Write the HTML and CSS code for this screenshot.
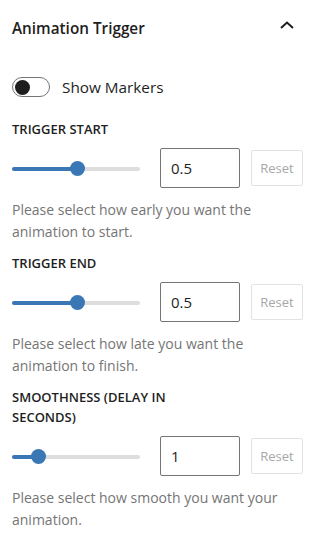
FILE: index.html
```html
<!DOCTYPE html>
<html>
<head>
<meta charset="utf-8">
<link rel="stylesheet" href="styles.css">
</head>
<body>
<div class="panel">
  <div class="header">
    <span class="title">Animation Trigger</span>
    <svg class="chevron" width="14" height="8" viewBox="0 0 14 8"><path d="M1 7 L7 1.5 L13 7" fill="none" stroke="#1e1e1e" stroke-width="2"/></svg>
  </div>

  <div class="toggle-row">
    <span class="toggle"><span class="knob"></span></span>
    <span class="toggle-label">Show Markers</span>
  </div>

  <div class="field">
    <div class="label">TRIGGER START</div>
    <div class="controls">
      <div class="slider">
        <div class="track"></div>
        <div class="fill" style="width:65px"></div>
        <div class="thumb" style="left:58px"></div>
      </div>
      <div class="input">0.5</div>
      <div class="reset">Reset</div>
    </div>
    <p class="desc">Please select how early you want the animation to start.</p>
  </div>

  <div class="field">
    <div class="label">TRIGGER END</div>
    <div class="controls">
      <div class="slider">
        <div class="track"></div>
        <div class="fill" style="width:65px"></div>
        <div class="thumb" style="left:58px"></div>
      </div>
      <div class="input">0.5</div>
      <div class="reset">Reset</div>
    </div>
    <p class="desc">Please select how late you want the animation to finish.</p>
  </div>

  <div class="field">
    <div class="label narrow">SMOOTHNESS (DELAY IN SECONDS)</div>
    <div class="controls">
      <div class="slider">
        <div class="track"></div>
        <div class="fill" style="width:26px"></div>
        <div class="thumb" style="left:19px"></div>
      </div>
      <div class="input">1</div>
      <div class="reset">Reset</div>
    </div>
    <p class="desc">Please select how smooth you want your animation.</p>
  </div>
</div>
</body>
</html>
```

FILE: styles.css
```css
html, body {
  margin: 0;
  padding: 0;
  background: #ffffff;
}
body {
  font-family: "Open Sans", "Noto Sans", sans-serif;
  color: #1e1e1e;
}
.panel {
  padding: 0 19px 0 12px;
}
.header {
  height: 56px;
  display: flex;
  align-items: center;
  justify-content: space-between;
}
.title {
  font-size: 15.3px;
  font-weight: 600;
}
.chevron {
  margin-right: 9px;
  margin-top: -6px;
}
.toggle-row {
  display: flex;
  align-items: center;
  gap: 12px;
  margin-top: 21px;
  height: 20px;
}
.toggle {
  width: 38px;
  height: 20px;
  box-sizing: border-box;
  border: 1px solid #757575;
  border-radius: 10px;
  display: flex;
  align-items: center;
  padding-left: 2px;
}
.knob {
  width: 15px;
  height: 15px;
  border-radius: 50%;
  background: #1e1e1e;
}
.toggle-label {
  font-size: 15.3px;
  color: #1e1e1e;
}
.field {
  margin-top: 22px;
}
.field + .field {
  margin-top: 10px;
}
.label {
  font-size: 13px;
  font-weight: 600;
  line-height: 20px;
  margin-bottom: 9px;
}
.label.narrow {
  width: 170px;
}
.controls {
  display: flex;
  align-items: center;
  height: 40px;
}
.slider {
  position: relative;
  width: 128px;
  height: 15px;
  margin-right: 20px;
}
.track {
  position: absolute;
  left: 0;
  right: 0;
  top: 6px;
  height: 4px;
  border-radius: 2px;
  background: #dddddd;
}
.fill {
  position: absolute;
  left: 0;
  top: 6px;
  height: 4px;
  border-radius: 2px;
  background: #3a78b5;
}
.thumb {
  position: absolute;
  top: 0;
  width: 15px;
  height: 15px;
  border-radius: 50%;
  background: #3a78b5;
}
.input {
  width: 80px;
  height: 40px;
  box-sizing: border-box;
  border: 1px solid #757575;
  border-radius: 2px;
  padding-left: 10px;
  display: flex;
  align-items: center;
  font-size: 15px;
  color: #1e1e1e;
}
.reset {
  margin-left: 11px;
  width: 52px;
  height: 36px;
  box-sizing: border-box;
  border: 1px solid #e2e2e2;
  border-radius: 2px;
  display: flex;
  align-items: center;
  justify-content: center;
  font-size: 13px;
  color: #a7a7a7;
}
.desc {
  margin: 11px 0 0;
  font-size: 14px;
  line-height: 22px;
  color: #757575;
}
```
